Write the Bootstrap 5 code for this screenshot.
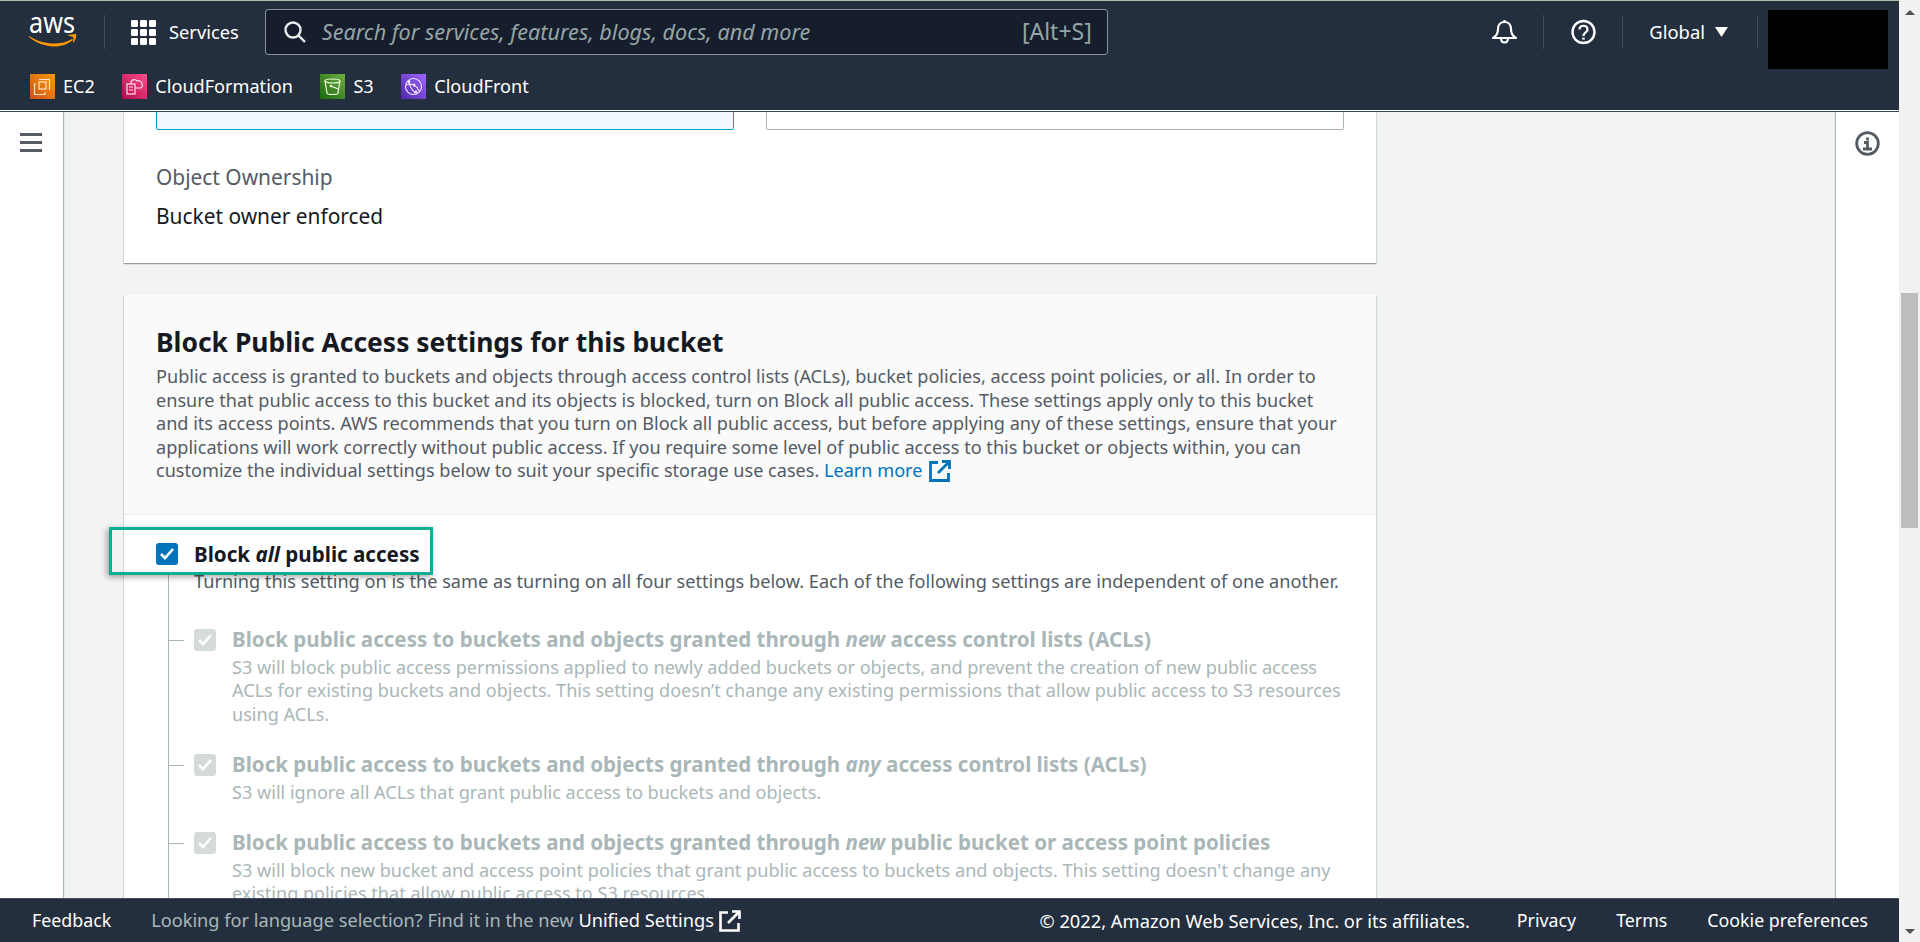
<!doctype html>
<html lang="en">
<head>
<meta charset="utf-8">
<title>S3 - Block Public Access</title>
<link href="https://cdn.jsdelivr.net/npm/bootstrap@5.3.0/dist/css/bootstrap.min.css" rel="stylesheet">
<style>
  html, body { height: 100%; overflow: hidden; }
  body { font-family: "Noto Sans", "Liberation Sans", sans-serif; font-size: 18.15px; line-height: 23.5px; color: #16191f; background: #fff; }
  .appframe { height: 942px; }
  .shell { width: 1899px; height: 942px; flex: none; }
  .topbar { background: #232f3e; border-top: 1px solid #a3c2a3; border-bottom: 1px solid #fff; height: 111px; color: #fff; flex: none; }
  .toprow { height: 62px; padding: 0 11px 0 29px; }
  .favrow { height: 47px; padding-left: 30px; gap: 27.5px; font-size: 18.1px; }
  .favitem { gap: 8px; }
  .sep { width: 1px; height: 34px; background: #414d5c; flex: none; }
  .logo { margin-right: 27px; overflow: visible; flex: none; }
  .logotext { font-family: "Noto Sans", sans-serif; font-size: 29px; fill: #fff; }
  .gridicon { margin: 0 13px 0 26px; flex: none; }
  .svc { font-size: 18.3px; }
  .searchbox { width: 843px; height: 46px; margin-left: 26px; background: #161e2d; border: 1px solid #879596; border-radius: 3px; color: #95a5a6; padding: 0 15px 0 18px; flex: none; }
  .searchtext { font-style: italic; font-size: 21.6px; margin-left: 16px; }
  .searchkey { font-size: 23px; }
  .topicon { flex: none; }
  .topgap { margin: 0 27px 0 26px; }
  .topgap-end { margin: 0 26px 0 26px; }
  .globaltxt { font-size: 18.4px; }
  .caret { margin: 0 29px 0 10px; flex: none; }
  .blackbox { width: 120px; height: 59px; background: #000; margin: 15px 0 0 10px; flex: none; }
  .tile { width: 25px; height: 25px; display: block; flex: none; }
  .midrow { border-top: 1px solid #3b4757; min-height: 0; }
  .sidenav { width: 63px; flex: none; box-shadow: 1px 0 1px #aab7b8; z-index: 1; padding: 21px 0 0 20px; }
  .midcol { background: #f2f3f3; overflow: hidden; padding-left: 61px; }
  .infobar { width: 63px; flex: none; box-shadow: -1px 0 1px #aab7b8; z-index: 1; padding: 19px 0 0 19px; }
  .panel-box { width: 1252px; background: #fff; box-shadow: 0 1px 1px rgba(0,28,36,.3), 1px 1px 1px rgba(0,28,36,.08), -1px 1px 1px rgba(0,28,36,.08); }
  .tilerow { padding: 0 32px; gap: 32px; }
  .choice { flex: 1; height: 18px; background: #fff; border: 1px solid #aab7b8; border-top: 0; border-radius: 0 0 2px 2px; }
  .choice-on { background: #f1faff; border-color: #00a1c9; }
  .metablock { padding: 0 32px; font-size: 20.9px; line-height: 24px; }
  .meta-lbl { color: #545b64; margin-top: 35px; }
  .meta-val { margin-top: 15px; padding-bottom: 35px; }
  .panel2 { margin-top: 32px; }
  .panel2-head { background: #fafafa; border-bottom: 1px solid #eaeded; padding: 31px 32px 0; height: 220px; }
  .panel2-head h2 { font-size: 26.45px; line-height: 32px; font-weight: 700; margin: 0 0 7px; }
  .panel2-head p { font-size: 18.1px; line-height: 23.5px; color: #545b64; margin: 0; }
  .learn { color: #0073bb; text-decoration: none; }
  .learnicon { vertical-align: -5px; margin-left: 2px; }
  .panel2-body { padding: 27px 32px 0; position: relative; }
  .allrow { height: 24px; gap: 16px; }
  .allrow label { font-weight: 700; font-size: 20.6px; line-height: 24px; }
  .highlight { position: absolute; left: -15px; top: 12px; width: 324px; height: 48px; border: 3px solid #0fae90; box-shadow: -2px 2px 6px rgba(0,0,0,.35); pointer-events: none; }
  .cb { width: 22px; height: 22px; border-radius: 3px; background: #0073bb; flex: none; display: flex; align-items: center; justify-content: center; }
  .cb-off { background: #d5dbdb; }
  .allhelp { color: #545b64; padding-left: 38px; margin-top: 4px; }
  .treewrap { border-left: 1px solid #aab7b8; margin: -19px 0 0 12px; padding: 52px 0 120px 0; font-size: 18.1px; }
  .treeitem { position: relative; display: flex; gap: 16px; padding-left: 25px; margin-bottom: 25.5px; color: #aab7b8; }
  .treeitem::before { content: ""; position: absolute; left: 0; top: 13px; width: 15px; height: 1px; background: #aab7b8; }
  .treeitem .cb { margin-top: 2px; }
  .treeitem h3 { font-size: 20.55px; line-height: 24px; font-weight: 700; margin: 0 0 5px; color: #aab7b8; }
  .scrolltrack { width: 21px; height: 942px; flex: none; background: #f1f1f1; }
  .thumb { width: 17px; height: 235px; margin-top: 278px; background: #bdbdbd; }
  .arrow-up, .arrow-down { width: 0; height: 0; border-left: 5px solid transparent; border-right: 5px solid transparent; }
  .arrow-up { margin-top: 10px; border-bottom: 5px solid #505050; }
  .arrow-down { margin-top: auto; margin-bottom: 8px; border-top: 5px solid #505050; }
  .footbar { height: 44px; flex: none; background: #232f3e; border-top: 1px solid #414d5c; color: #fff; font-size: 17.8px; padding: 0 31px 0 32px; position: relative; z-index: 2; }
  .foot-muted { color: #aab7b8; margin-left: 40px; font-size: 18.2px; }
  .foot-link { color: #fff; }
  .footicon { margin-left: 5px; }
  .foot-copy { font-size: 18.3px; }
  .foot-first { margin-left: 47px; }
  .foot-next { margin-left: 40px; }
</style>
</head>
<body>
<div class="appframe d-flex">
<div class="shell d-flex flex-column">
  <header class="topbar">
    <div class="toprow d-flex align-items-center">
      <svg class="logo" width="48" height="34" viewBox="0 0 48 34" fill="none"><text class="logotext" x="0" y="18" textLength="46" lengthAdjust="spacingAndGlyphs">aws</text><path d="M0 21c14 9 31 10 43 3l1 1C32 35 13 33 0 22z" fill="#f90"/><path d="M38 20l9-1c1 3-1 7-3 9 0-3 1-5 0-6z" fill="#f90"/></svg>
      <span class="sep"></span>
      <svg class="gridicon" width="25" height="25" viewBox="0 0 25 25" fill="#fff"><rect width="7" height="7" rx="1.2"/><rect x="9" width="7" height="7" rx="1.2"/><rect x="18" width="7" height="7" rx="1.2"/><rect y="9" width="7" height="7" rx="1.2"/><rect x="9" y="9" width="7" height="7" rx="1.2"/><rect x="18" y="9" width="7" height="7" rx="1.2"/><rect y="18" width="7" height="7" rx="1.2"/><rect x="9" y="18" width="7" height="7" rx="1.2"/><rect x="18" y="18" width="7" height="7" rx="1.2"/></svg>
      <span class="svc">Services</span>
      <div class="searchbox d-flex align-items-center">
        <svg width="22" height="22" viewBox="0 0 22 22" fill="none" stroke="#eaeded" stroke-width="2.4"><circle cx="9" cy="9" r="7.5"/><path d="M14.5 14.5L21 21"/></svg>
        <span class="searchtext flex-grow-1">Search for services, features, blogs, docs, and more</span>
        <span class="searchkey">[Alt+S]</span>
      </div>
      <svg class="topicon ms-auto" width="25" height="26" viewBox="0 0 25 26" fill="none" stroke="#fff" stroke-width="2.2" stroke-linejoin="round"><path d="M12.5 3c-4 0-6.5 3-6.5 7 0 4-1.500 7-5 9h23c-3.500-2-5-5-5-9 0-4-2.500-7-6.500-7z"/><path d="M12.500 1v2"/><path d="M9 19c0 6 7 6 7 0"/></svg>
      <span class="sep topgap"></span>
      <svg class="topicon" width="25" height="26" viewBox="0 0 25 26" fill="none" stroke="#fff" stroke-width="2.4"><circle cx="12.500" cy="13" r="11"/><path d="M8.500 10.500c0-5 8-5 8 0 0 3-4 3-4 6.500" stroke-width="2.200"/><path d="M12.500 18.500v2.200" stroke-width="2.400"/></svg>
      <span class="sep topgap-end"></span>
      <span class="globaltxt">Global</span>
      <svg class="caret" width="13" height="10" viewBox="0 0 13 10" fill="#fff"><path d="M0 0h13L6.500 10z"/></svg>
      <span class="sep"></span>
      <div class="blackbox"></div>
    </div>
    <div class="favrow d-flex align-items-center">
      <span class="favitem d-flex align-items-center">
        <svg class="tile" viewBox="0 0 25 25"><defs><linearGradient id="gEc2" x1="0" y1="1" x2="1" y2="0"><stop offset="0" stop-color="#c8511b"/><stop offset="1" stop-color="#f90"/></linearGradient></defs><rect width="25" height="25" fill="url(#gEc2)"/><g fill="none" stroke="#ffe6cc" stroke-width="1.200"><rect x="9" y="8" width="7" height="7"/><path d="M9 5.500h10.500V16M6 10H4.500v10.500H15V18"/></g></svg>EC2</span>
      <span class="favitem d-flex align-items-center">
        <svg class="tile" viewBox="0 0 25 25"><defs><linearGradient id="gCf" x1="0" y1="1" x2="1" y2="0"><stop offset="0" stop-color="#b0084d"/><stop offset="1" stop-color="#ff4f8b"/></linearGradient></defs><rect width="25" height="25" fill="url(#gCf)"/><g fill="none" stroke="#ffe0ec" stroke-width="1.200"><rect x="5" y="10" width="8" height="10"/><path d="M7 13h4M7 16h4M9 10V8c1-3 5-3 6-1 3-1 5 1 5 3 1 2 0 4-2 4h-5"/></g></svg>CloudFormation</span>
      <span class="favitem d-flex align-items-center">
        <svg class="tile" viewBox="0 0 25 25"><defs><linearGradient id="gS3" x1="0" y1="1" x2="1" y2="0"><stop offset="0" stop-color="#1b660f"/><stop offset="1" stop-color="#6cae3e"/></linearGradient></defs><rect width="25" height="25" fill="url(#gS3)"/><g fill="none" stroke="#f0ffe0" stroke-width="1.200"><ellipse cx="12.500" cy="7" rx="7.500" ry="2"/><path d="M5 7l2 12c0 2 11 2 11 0l2-12"/><path d="M11 12l7 3"/></g><circle cx="11" cy="12" r="1.300" fill="#f0ffe0"/></svg>S3</span>
      <span class="favitem d-flex align-items-center">
        <svg class="tile" viewBox="0 0 25 25"><defs><linearGradient id="gFront" x1="0" y1="1" x2="1" y2="0"><stop offset="0" stop-color="#4d27a8"/><stop offset="1" stop-color="#a166ff"/></linearGradient></defs><rect width="25" height="25" fill="url(#gFront)"/><g fill="none" stroke="#f0e6ff" stroke-width="1.100"><circle cx="12.500" cy="12.500" r="8"/><path d="M8 6c0 4 2 9 6 13M5 11c3-1 6-1 8 0M13 11c2 1 4 3 5 6"/></g><circle cx="8" cy="8" r="1.400" fill="#f0e6ff"/><circle cx="13" cy="11" r="1.400" fill="#f0e6ff"/><circle cx="15" cy="18" r="1.400" fill="#f0e6ff"/></svg>CloudFront</span>
    </div>
  </header>

  <div class="midrow d-flex flex-grow-1 overflow-hidden">
    <nav class="sidenav">
      <svg class="d-block" width="22" height="19" viewBox="0 0 22 19" fill="#545b64"><rect width="22" height="3"/><rect y="8" width="22" height="3"/><rect y="16" width="22" height="3"/></svg>
    </nav>
    <main class="midcol flex-grow-1">
      <section class="panel-box">
        <div class="tilerow d-flex">
          <div class="choice choice-on"></div>
          <div class="choice"></div>
        </div>
        <div class="metablock">
          <div class="meta-lbl">Object Ownership</div>
          <div class="meta-val">Bucket owner enforced</div>
        </div>
      </section>
      <section class="panel-box panel2">
        <div class="panel2-head">
          <h2>Block Public Access settings for this bucket</h2>
          <p>Public access is granted to buckets and objects through access control lists (ACLs), bucket policies, access point policies, or all. In order to ensure that public access to this bucket and its objects is blocked, turn on Block all public access. These settings apply only to this bucket and its access points. AWS recommends that you turn on Block all public access, but before applying any of these settings, ensure that your applications will work correctly without public access. If you require some level of public access to this bucket or objects within, you can customize the individual settings below to suit your specific storage use cases. <a class="learn" href="#">Learn more <svg class="learnicon" width="22" height="22" viewBox="0 0 22 22" fill="none" stroke="#0073bb" stroke-width="2.800"><path d="M9 2.500H1.500v18h18V13"/><path d="M13 1.500h7.500V9M20 2L9 13"/></svg></a></p>
        </div>
        <div class="panel2-body">
          <div class="highlight"></div>
          <div class="allrow d-flex align-items-center">
            <span class="cb"><svg width="14" height="12" viewBox="0 0 14 12" fill="none" stroke="#fff" stroke-width="2.600"><path d="M1 6l4 4 8-9"/></svg></span>
            <label>Block <em>all</em> public access</label>
          </div>
          <div class="allhelp">Turning this setting on is the same as turning on all four settings below. Each of the following settings are independent of one another.</div>
          <div class="treewrap">
            <div class="treeitem">
              <span class="cb cb-off"><svg width="14" height="12" viewBox="0 0 14 12" fill="none" stroke="#fff" stroke-width="2.600"><path d="M1 6l4 4 8-9"/></svg></span>
              <div>
                <h3>Block public access to buckets and objects granted through <em>new</em> access control lists (ACLs)</h3>
                <div>S3 will block public access permissions applied to newly added buckets or objects, and prevent the creation of new public access ACLs for existing buckets and objects. This setting doesn’t change any existing permissions that allow public access to S3 resources using ACLs.</div>
              </div>
            </div>
            <div class="treeitem">
              <span class="cb cb-off"><svg width="14" height="12" viewBox="0 0 14 12" fill="none" stroke="#fff" stroke-width="2.600"><path d="M1 6l4 4 8-9"/></svg></span>
              <div>
                <h3>Block public access to buckets and objects granted through <em>any</em> access control lists (ACLs)</h3>
                <div>S3 will ignore all ACLs that grant public access to buckets and objects.</div>
              </div>
            </div>
            <div class="treeitem">
              <span class="cb cb-off"><svg width="14" height="12" viewBox="0 0 14 12" fill="none" stroke="#fff" stroke-width="2.600"><path d="M1 6l4 4 8-9"/></svg></span>
              <div>
                <h3>Block public access to buckets and objects granted through <em>new</em> public bucket or access point policies</h3>
                <div>S3 will block new bucket and access point policies that grant public access to buckets and objects. This setting doesn't change any existing policies that allow public access to S3 resources.</div>
              </div>
            </div>
          </div>
        </div>
      </section>
    </main>
    <aside class="infobar">
      <svg class="d-block" width="25" height="25" viewBox="0 0 25 25" fill="none" stroke="#545b64" stroke-width="2.800"><circle cx="12.500" cy="12.500" r="10.800"/><path d="M12.500 6.500v3M9 11.500h3.500v6M8 18h9"/></svg>
    </aside>
  </div>

  <footer class="footbar d-flex align-items-center">
    <span>Feedback</span>
    <span class="foot-muted">Looking for language selection? Find it in the new <span class="foot-link">Unified Settings</span></span>
    <svg class="footicon" width="22" height="22" viewBox="0 0 22 22" fill="none" stroke="#fff" stroke-width="2.600"><path d="M9 2.500H1.500v18h18V13"/><path d="M13 1.500h7.500V9M20 2L9 13"/></svg>
    <span class="foot-copy ms-auto">© 2022, Amazon Web Services, Inc. or its affiliates.</span>
    <span class="foot-first">Privacy</span>
    <span class="foot-next">Terms</span>
    <span class="foot-next">Cookie preferences</span>
  </footer>
</div>
<div class="scrolltrack d-flex flex-column align-items-center"><span class="arrow-up"></span><span class="thumb"></span><span class="arrow-down"></span></div>
</div>
<script src="https://cdn.jsdelivr.net/npm/bootstrap@5.3.0/dist/js/bootstrap.bundle.min.js"></script>
</body>
</html>
